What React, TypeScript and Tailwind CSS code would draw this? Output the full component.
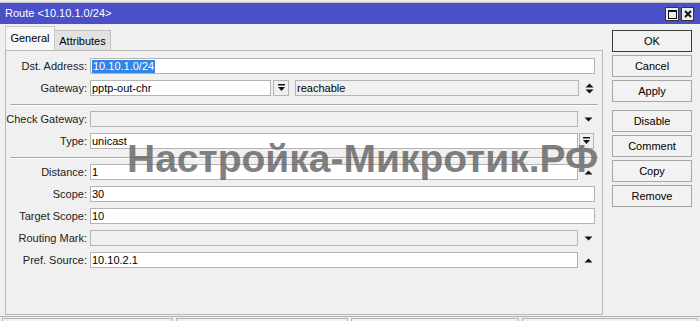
import type { ReactNode } from "react";

const FONT = { fontFamily: '"Liberation Sans", Arial, sans-serif' };

function DownBar() {
  return (
    <svg width="9" height="8" viewBox="0 0 9 8">
      <rect x="1" y="0" width="7" height="1.5" fill="#111" />
      <path d="M1 3 L8 3 L4.5 7 Z" fill="#111" />
    </svg>
  );
}

function Down() {
  return (
    <svg width="9" height="5" viewBox="0 0 9 5">
      <path d="M0.5 0.5 L8.5 0.5 L4.5 4.5 Z" fill="#111" />
    </svg>
  );
}

function Up() {
  return (
    <svg width="9" height="5" viewBox="0 0 9 5">
      <path d="M0.5 4.5 L8.5 4.5 L4.5 0.5 Z" fill="#111" />
    </svg>
  );
}

function UpDown() {
  return (
    <svg width="9" height="11" viewBox="0 0 9 11">
      <path d="M0.5 4.5 L8.5 4.5 L4.5 0.5 Z" fill="#111" />
      <path d="M0.5 6.5 L8.5 6.5 L4.5 10.5 Z" fill="#111" />
    </svg>
  );
}

function Box({ w, disabled, children }: { w: string; disabled?: boolean; children?: ReactNode }) {
  return (
    <div
      className={`flex h-[16px] items-center border border-[#b4b4b4] pl-[1px] text-[11px] leading-none text-black ${w} ${
        disabled ? "bg-[#f0f0f0]" : "bg-white"
      }`}
    >
      {children}
    </div>
  );
}

function Row({ label, children, top = "mt-[6px]" }: { label: string; children: ReactNode; top?: string }) {
  return (
    <div className={`flex h-[16px] items-center ${top}`}>
      <div className="w-[82px] pr-[1px] text-right text-[11px] text-[#222]">{label}</div>
      <div className="ml-[2px] flex items-center">{children}</div>
    </div>
  );
}

function Slot({ children }: { children?: ReactNode }) {
  return <div className="flex w-[19px] items-center justify-center pl-[2px]">{children}</div>;
}

function Sep() {
  return <div className="ml-[4px] mr-[4px] mt-[8px] h-[2px] border-t border-b border-t-[#a8a8a8] border-b-white" />;
}

function Btn({ label, def, className = "" }: { label: string; def?: boolean; className?: string }) {
  return (
    <div
      className={`flex h-[22px] items-center justify-center border bg-[#f2f2f2] text-[11px] text-black ${
        def ? "border-[#3c3c3c]" : "border-[#a6a6a6]"
      } ${className}`}
    >
      {label}
    </div>
  );
}

export default function App() {
  return (
    <div style={FONT} className="relative h-[321px] w-[700px] overflow-hidden bg-[#f0f0f0]">
      <div className="h-[3px] border-b border-[#c8c8c8] bg-[#e9e9e9]" />

      <div className="flex h-[21px] items-center bg-[#4b50c9] pl-[5px] pr-[6px]">
        <span className="text-[11px] text-white">Route &lt;10.10.1.0/24&gt;</span>
        <div className="ml-auto mt-[1px] flex gap-[2px]">
          <div className="flex h-[14px] w-[14px] items-center justify-center border border-[#333] bg-[#eeeeee]">
            <div className="h-[9px] w-[9px] border border-t-2 border-[#111]" />
          </div>
          <div className="flex h-[14px] w-[13px] items-center justify-center border border-[#333] bg-[#eeeeee]">
            <svg width="8" height="8" viewBox="0 0 8 8">
              <path d="M1 1 L7 7 M7 1 L1 7" stroke="#111" strokeWidth="1.8" />
            </svg>
          </div>
        </div>
      </div>

      <div className="flex h-[292px]">
        <div className="ml-[5px] mt-[3px] flex w-[598px] flex-col">
          <div className="flex h-[23px] items-end">
            <div className="flex h-[24px] w-[50px] items-center justify-center border border-b-0 border-[#c8c8c8] bg-[#f7f7f7] text-[11px] text-black">
              General
            </div>
            <div className="flex h-[20px] w-[56px] items-center justify-center border border-b-0 border-l-0 border-[#c0c0c0] bg-[#e2e2e2] pt-[2px] text-[11px] text-black">
              Attributes
            </div>
          </div>
          <div className="mb-[1px] flex-1 border border-[#b8b8b8] bg-[#f0f0f0] pt-[7px]">
            <Row label="Dst. Address:" top="">
              <Box w="w-[505px]">
                <span className="bg-[#3285e6] px-[1px] py-[1px] text-white">10.10.1.0/24</span>
              </Box>
            </Row>
            <Row label="Gateway:">
              <Box w="w-[181px]">pptp-out-chr</Box>
              <div className="ml-[2px] flex h-[16px] w-[16px] items-center justify-center border border-[#b4b4b4] bg-[#f0f0f0]">
                <DownBar />
              </div>
              <div className="ml-[6px]">
                <Box w="w-[284px]" disabled>
                  reachable
                </Box>
              </div>
              <Slot>
                <UpDown />
              </Slot>
            </Row>
            <Sep />
            <Row label="Check Gateway:" top="mt-[5px]">
              <Box w="w-[488px]" disabled />
              <Slot>
                <Down />
              </Slot>
            </Row>
            <Row label="Type:">
              <Box w="w-[488px]">unicast</Box>
              <div className="ml-[1px] flex h-[16px] w-[15px] items-center justify-center border border-[#b4b4b4] bg-[#f0f0f0]">
                <DownBar />
              </div>
            </Row>
            <Sep />
            <Row label="Distance:" top="mt-[5px]">
              <Box w="w-[488px]">1</Box>
              <Slot>
                <Up />
              </Slot>
            </Row>
            <Row label="Scope:">
              <Box w="w-[505px]">30</Box>
            </Row>
            <Row label="Target Scope:">
              <Box w="w-[505px]">10</Box>
            </Row>
            <Row label="Routing Mark:">
              <Box w="w-[488px]" disabled />
              <Slot>
                <Down />
              </Slot>
            </Row>
            <Row label="Pref. Source:">
              <Box w="w-[488px]">10.10.2.1</Box>
              <Slot>
                <Up />
              </Slot>
            </Row>
          </div>
        </div>

        <div className="ml-[9px] mt-[6px] flex w-[80px] flex-col">
          <Btn label="OK" def />
          <Btn label="Cancel" className="mt-[3px]" />
          <Btn label="Apply" className="mt-[3px]" />
          <Btn label="Disable" className="mt-[8px]" />
          <Btn label="Comment" className="mt-[3px]" />
          <Btn label="Copy" className="mt-[3px]" />
          <Btn label="Remove" className="mt-[3px]" />
        </div>
      </div>

      <div className="flex h-[5px] gap-[3px] border-t border-[#b0b0b0] px-[2px] pt-[1px]">
        <div className="w-[171px] border border-b-0 border-[#b4b4b4]" />
        <div className="w-[172px] border border-b-0 border-[#b4b4b4]" />
        <div className="w-[168px] border border-b-0 border-[#b4b4b4]" />
        <div className="flex-1 border border-b-0 border-[#b4b4b4]" />
      </div>

      <div className="pointer-events-none absolute left-[127px] top-[139px] whitespace-nowrap text-[39px] font-bold leading-[39px] text-[rgba(100,100,100,0.82)]">
        Настройка-Микротик.РФ
      </div>
    </div>
  );
}
